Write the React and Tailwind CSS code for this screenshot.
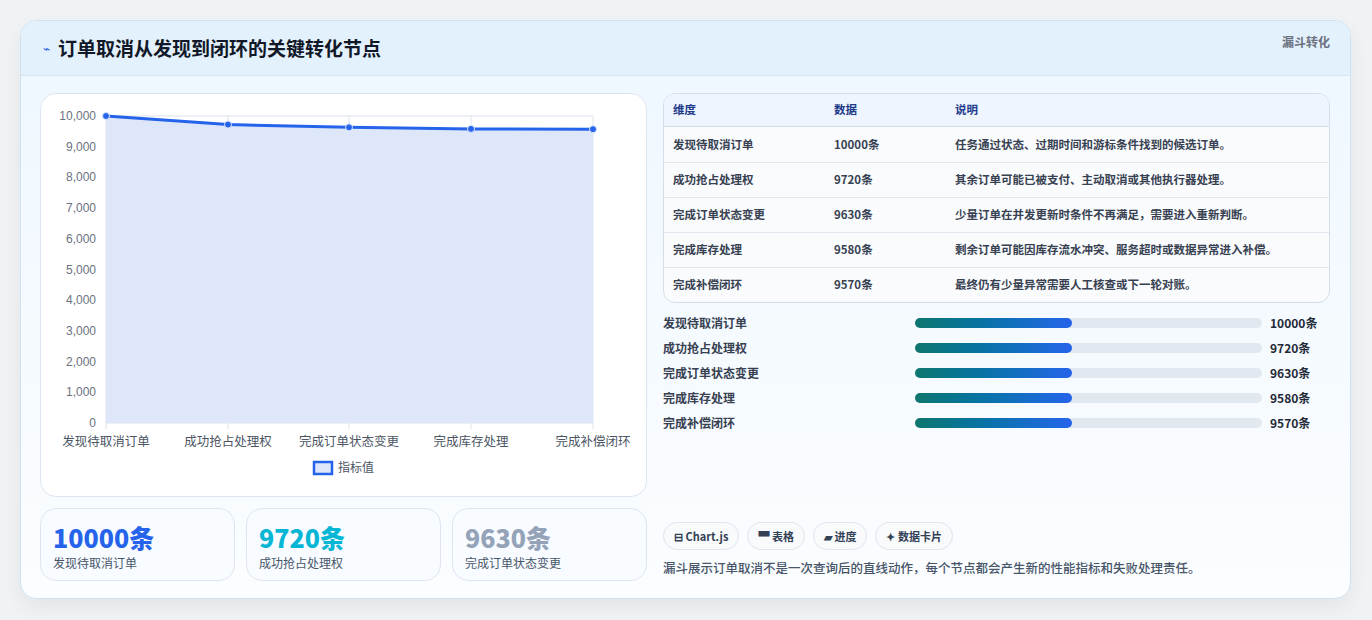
const steps = [
  { name: '发现待取消订单', v: 10000, note: '任务通过状态、过期时间和游标条件找到的候选订单。' },
  { name: '成功抢占处理权', v: 9720, note: '其余订单可能已被支付、主动取消或其他执行器处理。' },
  { name: '完成订单状态变更', v: 9630, note: '少量订单在并发更新时条件不再满足，需要进入重新判断。' },
  { name: '完成库存处理', v: 9580, note: '剩余订单可能因库存流水冲突、服务超时或数据异常进入补偿。' },
  { name: '完成补偿闭环', v: 9570, note: '最终仍有少量异常需要人工核查或下一轮对账。' },
]

const font = { fontFamily: '"Noto Sans CJK SC", "Noto Sans", sans-serif' }

function Chart() {
  const xs = [65, 187, 308, 430, 552]
  const y = (v) => 329 - v * 0.0307
  const pts = steps.map((s, i) => [xs[i], y(s.v)])
  const line = pts.map((p, i) => `${i ? 'L' : 'M'}${p[0]},${p[1]}`).join(' ')
  return (
    <svg width="606" height="401" className="block">
      {[0, 1, 2, 3, 4, 5, 6, 7, 8, 9, 10].map((k) => (
        <g key={k}>
          <line x1="65" x2="552" y1={329 - 30.7 * k} y2={329 - 30.7 * k} stroke="#dbe3ec" />
          <text x="55" y={333 - 30.7 * k} textAnchor="end" fontSize="12" fill="#6b7280" fontFamily="Liberation Sans, sans-serif">
            {k === 0 ? '0' : (k * 1000).toLocaleString('en-US')}
          </text>
        </g>
      ))}
      {xs.map((x) => <line key={x} x1={x} x2={x} y1="22" y2="335" stroke="#dbe3ec" />)}
      <path d={`${line} L552,329 L65,329 Z`} fill="#dde7f9" />
      <path d={line} fill="none" stroke="#2563eb" strokeWidth="3" />
      {pts.map((p, i) => <circle key={i} cx={p[0]} cy={p[1]} r="3.5" fill="#2563eb" stroke="#dbe7ff" strokeWidth="1" />)}
      {steps.map((s, i) => (
        <text key={i} x={xs[i]} y="352" textAnchor="middle" fontSize="12.5" fill="#4b5563" style={font}>{s.name}</text>
      ))}
      <rect x="273" y="368" width="18" height="12" fill="#dde7f9" stroke="#2563eb" strokeWidth="2.5" />
      <text x="297" y="378" fontSize="12" fill="#4b5563" style={font}>指标值</text>
    </svg>
  )
}

function Stat({ v, label, color }) {
  return (
    <div className="flex-1 rounded-2xl border border-[#dde6f0] bg-[#f8fbff] px-3 pt-3 h-[73px]">
      <div className={`text-[25px] leading-8 font-extrabold ${color}`}>{v}条</div>
      <div className="text-xs text-[#475569] mt-0.5">{label}</div>
    </div>
  )
}

export default function App() {
  return (
    <div className="w-[1372px] h-[620px] bg-[#f1f2f4] pt-5 pl-5" style={font}>
      <div className="w-[1331px] h-[579px] rounded-2xl border border-[#cde3f3] bg-gradient-to-b from-[#eef7ff] to-[#fbfdff] overflow-hidden shadow-[0_8px_20px_rgba(0,0,0,0.06)]">
        <div className="h-[55px] bg-[#e3f1fd] border-b border-[#d3e6f6] flex items-center justify-between pl-[22px] pr-5">
          <div className="flex items-center gap-2">
            <span className="text-[#2563eb] text-[12px]">⌁</span>
            <span className="text-[19px] font-bold text-[#111827]">订单取消从发现到闭环的关键转化节点</span>
          </div>
          <span className="text-xs font-bold text-[#6b7280] -mt-3">漏斗转化</span>
        </div>
        <div className="flex gap-4 pl-[19px] pr-5 pt-[17px]">
          <div className="w-[607px] flex flex-col gap-[11px]">
            <div className="h-[404px] rounded-2xl border border-[#dde6f0] bg-white overflow-hidden"><Chart /></div>
            <div className="flex gap-[11px]">
              <Stat v="10000" label="发现待取消订单" color="text-[#2563eb]" />
              <Stat v="9720" label="成功抢占处理权" color="text-[#06b6d4]" />
              <Stat v="9630" label="完成订单状态变更" color="text-[#94a3b8]" />
            </div>
          </div>
          <div className="w-[671px] flex flex-col">
            <div className="rounded-xl border border-[#d5dee8] overflow-hidden bg-[#f9fbfd] text-[11.5px]">
              <div className="flex h-[33px] items-center bg-[#eef5fe] border-b border-[#d5dee8] font-bold text-[#1e3a8a]">
                <div className="w-[170px] pl-[9px]">维度</div><div className="w-[121px]">数据</div><div>说明</div>
              </div>
              {steps.map((s, i) => (
                <div key={i} className={`flex h-[35px] items-center font-semibold text-[#374151] ${i ? 'border-t border-[#e2e8f0]' : ''}`}>
                  <div className="w-[170px] pl-[9px]">{s.name}</div><div className="w-[121px]">{s.v}条</div><div>{s.note}</div>
                </div>
              ))}
            </div>
            <div className="mt-[7px] flex flex-col">
              {steps.map((s, i) => (
                <div key={i} className="flex items-center h-[25px] text-xs font-semibold text-[#374151]">
                  <div className="w-[252px]">{s.name}</div>
                  <div className="w-[347px] h-2.5 rounded-full bg-[#e2e8f0]">
                    <div className="w-[157px] h-2.5 rounded-full bg-gradient-to-r from-[#0f766e] to-[#2563eb]" />
                  </div>
                  <div className="ml-2 font-bold text-[#1f2937]">{s.v}条</div>
                </div>
              ))}
            </div>
            <div className="mt-[87px] flex gap-2 text-[11px] font-semibold text-[#334155]">
              {['⊟ Chart.js', '▀ 表格', '▰ 进度', '✦ 数据卡片'].map((t) => (
                <span key={t} className="h-7 px-2.5 flex items-center rounded-full border border-[#dfe6ee] bg-[#f8fafc]">{t}</span>
              ))}
            </div>
            <div className="mt-[9px] text-[12.5px] text-[#475569] font-medium">漏斗展示订单取消不是一次查询后的直线动作，每个节点都会产生新的性能指标和失败处理责任。</div>
          </div>
        </div>
      </div>
    </div>
  )
}
